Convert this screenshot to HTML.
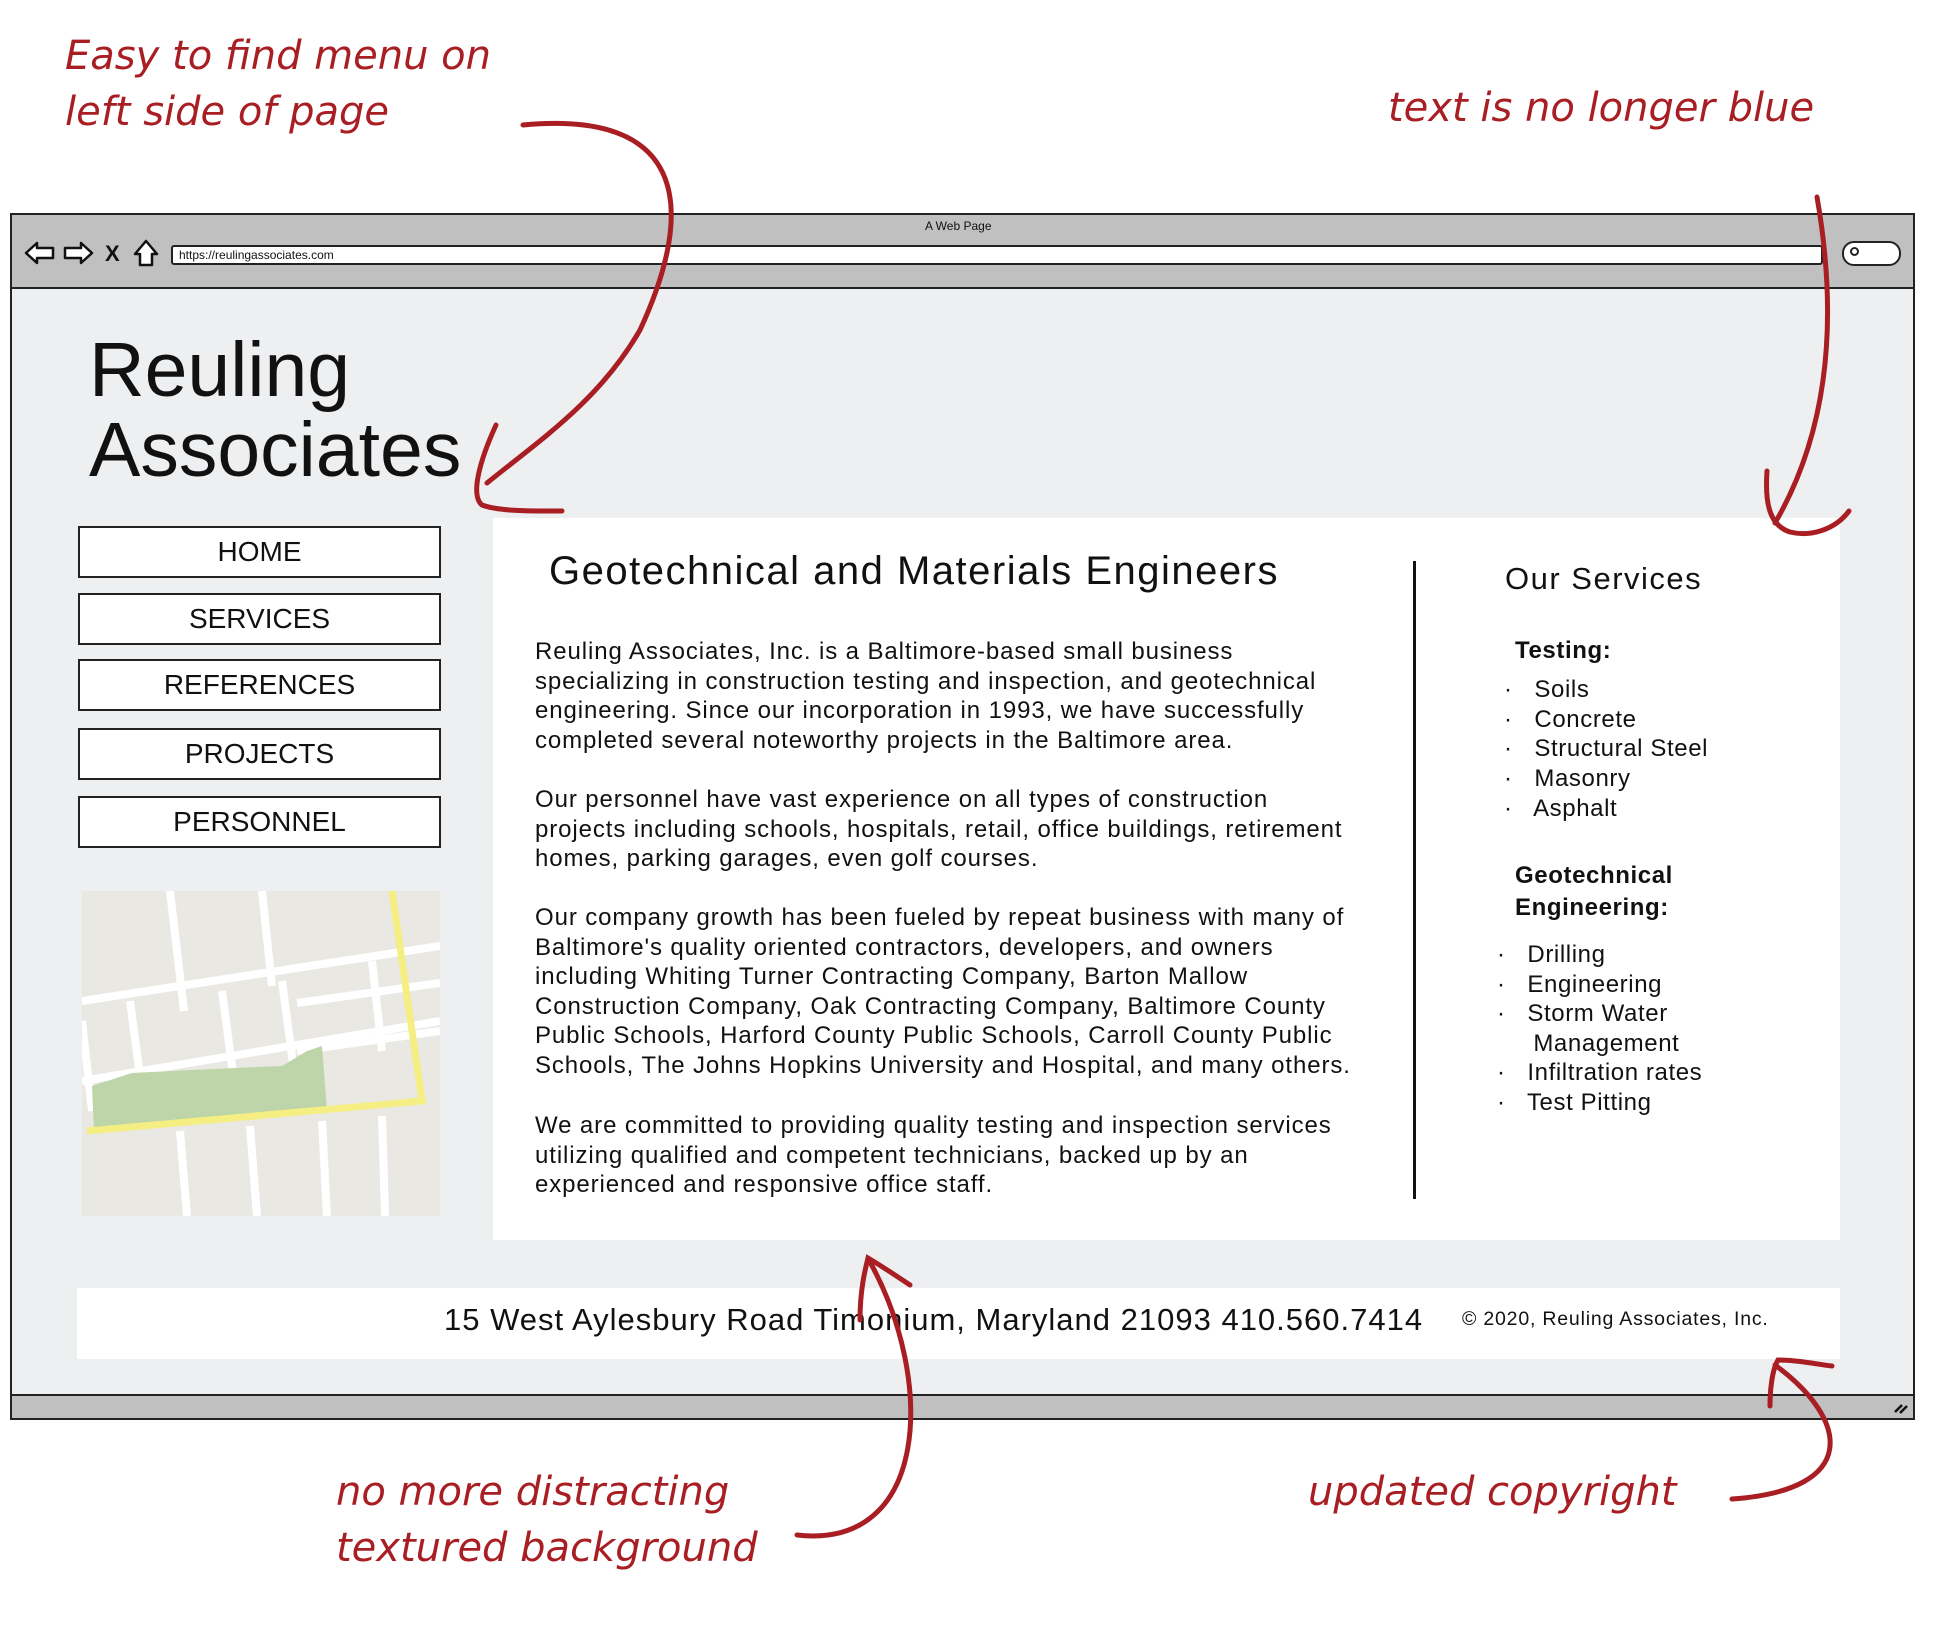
<!DOCTYPE html>
<html><head><meta charset="utf-8">
<style>
*{margin:0;padding:0;box-sizing:border-box}
body{width:1953px;height:1650px;background:#fff;position:relative;overflow:hidden;font-family:"Liberation Sans",sans-serif;color:#111}
.a{position:absolute;white-space:nowrap}
.red{color:#a81e23;font-family:"DejaVu Sans","Liberation Sans",sans-serif;font-style:italic;font-size:40px;font-weight:300;letter-spacing:0}
.btn{position:absolute;left:78px;width:363px;height:52px;border:2.5px solid #222;background:#fff;font-size:28px;text-align:center;line-height:48px}
.p{position:absolute;left:535px;font-size:24px;letter-spacing:0.9px;line-height:29.6px;width:900px}
.li{position:absolute;font-size:24px;letter-spacing:0.6px}
</style></head><body>

<div class="a red" style="left:65px;top:33px">Easy to find menu on</div>
<div class="a red" style="left:65px;top:89px">left side of page</div>
<div class="a red" style="left:1388px;top:85px">text is no longer blue</div>
<div class="a red" style="left:336px;top:1469px">no more distracting</div>
<div class="a red" style="left:336px;top:1525px">textured background</div>
<div class="a red" style="left:1308px;top:1469px">updated copyright</div>

<!-- browser frame -->
<div class="a" style="left:10px;top:213px;width:1905px;height:1207px;border:2.5px solid #222;background:#eeeff1"></div>
<div class="a" style="left:10px;top:213px;width:1905px;height:76px;border:2.5px solid #222;background:#c0c0c0"></div>
<div class="a" style="left:10px;top:1394px;width:1905px;height:26px;border:2.5px solid #222;background:#c0c0c0"></div>
<div class="a" style="left:925px;top:219px;font-size:12px">A Web Page</div>
<div class="a" style="left:171px;top:245px;width:1652px;height:20px;border:2px solid #222;background:#fff;border-radius:3px;font-size:12px;line-height:16px;padding-left:6px">https://reulingassociates.com</div>
<div class="a" style="left:1842px;top:241px;width:59px;height:25px;border:2px solid #222;background:#fff;border-radius:12px"></div>
<div class="a" style="left:1850px;top:247px;width:9px;height:9px;border:2px solid #222;border-radius:50%"></div>
<svg class="a" style="left:22px;top:236px" width="140" height="34" viewBox="0 0 140 34">
<g fill="#fff" stroke="#111" stroke-width="2.5" stroke-linejoin="round">
<path d="M4 17 L15 7 L15 12 L31 12 L31 22 L15 22 L15 27 Z"/>
<path d="M70 17 L59 7 L59 12 L43 12 L43 22 L59 22 L59 27 Z"/>
<path d="M124 5 L135 18 L130 18 L130 29 L118 29 L118 18 L113 18 Z"/>
</g>
<text x="83" y="25" font-family="Liberation Sans" font-weight="bold" font-size="22" fill="#111">X</text>
</svg>
<svg class="a" style="left:1892px;top:1400px" width="18" height="16"><path d="M3 12 L10 5 M8 13 L15 6" stroke="#111" stroke-width="2.5"/></svg>

<div class="a" style="left:89px;top:330px;font-size:77px;line-height:80px">Reuling<br>Associates</div>

<div class="btn" style="top:526px">HOME</div>
<div class="btn" style="top:593px">SERVICES</div>
<div class="btn" style="top:659px">REFERENCES</div>
<div class="btn" style="top:728px">PROJECTS</div>
<div class="btn" style="top:796px">PERSONNEL</div>

<svg class="a" style="left:82px;top:891px" width="358" height="325" viewBox="0 0 358 325">
<rect width="358" height="325" fill="#e9e8e2"/>
<g stroke="#fff" stroke-width="8" fill="none">
<path d="M0 110 L358 55"/><path d="M0 190 L358 130"/><path d="M215 112 L358 92"/><path d="M215 160 L358 140"/>
<path d="M88 0 L102 120"/><path d="M180 0 L190 95"/><path d="M48 110 L60 200 M140 100 L152 190 M200 90 L212 180 M290 70 L300 160"/>
<path d="M98 240 L105 325 M168 235 L175 325 M240 230 L245 325 M300 225 L303 325"/>
<path d="M0 130 L10 220"/>
</g>
<path d="M10 195 L50 182 L130 178 L200 175 L225 160 L240 155 L245 220 L12 240 Z" fill="#bdd5a8"/>
<g stroke="#f5ee82" stroke-width="7" fill="none"><path d="M5 240 L340 210 L310 0"/></g>
</svg>

<!-- main panel -->
<div class="a" style="left:493px;top:518px;width:1347px;height:722px;background:#fff"></div>
<div class="a" style="left:549px;top:549px;font-size:40px;letter-spacing:1.5px">Geotechnical and Materials Engineers</div>
<div class="p" style="top:637px">Reuling Associates, Inc. is a Baltimore-based small business<br>specializing in construction testing and inspection, and geotechnical<br>engineering. Since our incorporation in 1993, we have successfully<br>completed several noteworthy projects in the Baltimore area.</div>
<div class="p" style="top:785px">Our personnel have vast experience on all types of construction<br>projects including schools, hospitals, retail, office buildings, retirement<br>homes, parking garages, even golf courses.</div>
<div class="p" style="top:903px">Our company growth has been fueled by repeat business with many of<br>Baltimore's quality oriented contractors, developers, and owners<br>including Whiting Turner Contracting Company, Barton Mallow<br>Construction Company, Oak Contracting Company, Baltimore County<br>Public Schools, Harford County Public Schools, Carroll County Public<br>Schools, The Johns Hopkins University and Hospital, and many others.</div>
<div class="p" style="top:1111px">We are committed to providing quality testing and inspection services<br>utilizing qualified and competent technicians, backed up by an<br>experienced and responsive office staff.</div>
<div class="a" style="left:1413px;top:561px;width:2.5px;height:638px;background:#111"></div>

<div class="a" style="left:1505px;top:561px;font-size:31px;letter-spacing:1.5px">Our Services</div>
<div class="li" style="left:1515px;top:637px;font-weight:bold">Testing:</div>
<div class="li" style="left:1504px;top:675px;line-height:29.7px">·&nbsp;&nbsp; Soils<br>·&nbsp;&nbsp; Concrete<br>·&nbsp;&nbsp; Structural Steel<br>·&nbsp;&nbsp; Masonry<br>·&nbsp;&nbsp; Asphalt</div>
<div class="li" style="left:1515px;top:860px;font-weight:bold;line-height:32px">Geotechnical<br>Engineering:</div>
<div class="li" style="left:1497px;top:940px;line-height:29.6px">·&nbsp;&nbsp; Drilling<br>·&nbsp;&nbsp; Engineering<br>·&nbsp;&nbsp; Storm Water<br>&nbsp;&nbsp;&nbsp;&nbsp; Management<br>·&nbsp;&nbsp; Infiltration rates<br>·&nbsp;&nbsp; Test Pitting</div>

<!-- footer -->
<div class="a" style="left:77px;top:1288px;width:1763px;height:71px;background:#fff"></div>
<div class="a" style="left:444px;top:1302px;font-size:31px;letter-spacing:1px">15 West Aylesbury Road Timonium, Maryland 21093 410.560.7414</div>
<div class="a" style="left:1462px;top:1308px;font-size:19.5px;letter-spacing:0.8px">© 2020, Reuling Associates, Inc.</div>

<svg class="a" style="left:0;top:0" width="1953" height="1650">
<g fill="none" stroke="#a81e23" stroke-width="5" stroke-linecap="round">
<path d="M523 125 C680 110 700 200 640 330 C600 400 540 440 487 483"/>
<path d="M496 425 C480 460 470 495 482 505 C500 512 540 511 562 511"/>
<path d="M1817 197 C1835 300 1835 420 1775 523"/>
<path d="M1767 471 C1765 500 1768 525 1790 532 C1810 537 1835 530 1849 511"/>
<path d="M797 1535 C930 1550 935 1380 870 1262"/>
<path d="M860 1320 C860 1290 865 1270 868 1258 C880 1265 895 1275 910 1285"/>
<path d="M1732 1499 C1860 1490 1850 1420 1775 1365"/>
<path d="M1770 1406 C1770 1390 1772 1370 1778 1360 C1800 1360 1820 1365 1832 1366"/>
</g>
</svg>
</body></html>
